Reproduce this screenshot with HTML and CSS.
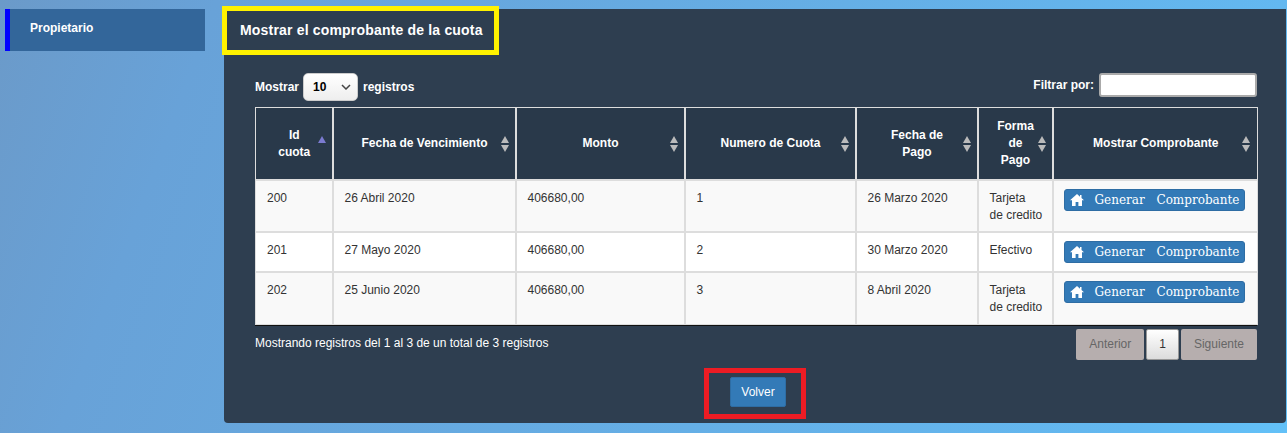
FILE: index.html
```html
<!DOCTYPE html>
<html>
	<head>
		<meta charset="utf-8"/>
		<title>Mostrar el comprobante de la cuota</title>
		<link rel="stylesheet" href="styles.css">
	</head>
	<body>
		<aside class="sidebar">
			<a class="side-item" href="#">Propietario</a>
		</aside>
		<main class="panel">
			<h1 class="panel-title">Mostrar el comprobante de la cuota</h1>
			<div class="controls">
				<label class="length">
					Mostrar
					<span class="fake-select">10
						<svg class="chevron" width="10" height="6" viewBox="0 0 10 6"><path d="M1 1l4 4 4-4" fill="none" stroke="#444" stroke-width="1.5"/></svg>
					</span>
					registros
				</label>
				<label class="filter">
					Filtrar por:
					<input type="text" class="filter-input">
				</label>
			</div>
			<table class="grid">
				<colgroup>
					<col class="c1"><col class="c2"><col class="c3"><col class="c4"><col class="c5"><col class="c6"><col class="c7">
				</colgroup>
				<thead>
					<tr>
						<th class="sorted">Id<br>cuota</th>
						<th>Fecha de Vencimiento</th>
						<th>Monto</th>
						<th>Numero de Cuota</th>
						<th>Fecha de<br>Pago</th>
						<th>Forma<br>de<br>Pago</th>
						<th>Mostrar Comprobante</th>
					</tr>
				</thead>
				<tbody>
					<tr class="odd">
						<td>200</td>
						<td>26 Abril 2020</td>
						<td>406680,00</td>
						<td>1</td>
						<td>26 Marzo 2020</td>
						<td>Tarjeta<br>de credito</td>
						<td class="action"><a class="gen-btn" href="#"><svg class="home" width="14" height="12" viewBox="0 0 14 12"><path d="M7 0L0 6.200h2V12h3.600V8h2.800v4H12V6.200h2L11.500 4V1H10v1.700z" fill="#fff"/></svg><span class="gen-label">Generar Comprobante</span></a></td>
					</tr>
					<tr>
						<td>201</td>
						<td>27 Mayo 2020</td>
						<td>406680,00</td>
						<td>2</td>
						<td>30 Marzo 2020</td>
						<td>Efectivo</td>
						<td class="action"><a class="gen-btn" href="#"><svg class="home" width="14" height="12" viewBox="0 0 14 12"><path d="M7 0L0 6.200h2V12h3.600V8h2.800v4H12V6.200h2L11.500 4V1H10v1.700z" fill="#fff"/></svg><span class="gen-label">Generar Comprobante</span></a></td>
					</tr>
					<tr class="odd">
						<td>202</td>
						<td>25 Junio 2020</td>
						<td>406680,00</td>
						<td>3</td>
						<td>8 Abril 2020</td>
						<td>Tarjeta<br>de credito</td>
						<td class="action"><a class="gen-btn" href="#"><svg class="home" width="14" height="12" viewBox="0 0 14 12"><path d="M7 0L0 6.200h2V12h3.600V8h2.800v4H12V6.200h2L11.500 4V1H10v1.700z" fill="#fff"/></svg><span class="gen-label">Generar Comprobante</span></a></td>
					</tr>
				</tbody>
			</table>
			<div class="table-foot">
				<p class="info">Mostrando registros del 1 al 3 de un total de 3 registros</p>
				<nav class="pager">
					<a class="page off" href="#">Anterior</a>
					<a class="page current" href="#">1</a>
					<a class="page off" href="#">Siguiente</a>
				</nav>
			</div>
			<div class="back">
				<div class="back-mark">
					<a class="back-btn" href="#">Volver</a>
				</div>
			</div>
		</main>
	</body>
</html>
```

FILE: styles.css
```css
body {
	margin: 0;
	box-sizing: border-box;
	height: 433px;
	overflow: hidden;
	display: flex;
	align-items: flex-start;
	padding: 9px 0 0 5px;
	font-family: "Liberation Sans", Arial, sans-serif;
	font-size: 12px;
	line-height: 17px;
	color: #333;
	background: linear-gradient(110deg, #6b9ac9 0%, #68a2d8 15%, #63b8f0 89%, #63c1f8 100%);
}
.sidebar {
	width: 200px;
	flex: none;
}
.side-item {
	display: block;
	height: 42px;
	box-sizing: border-box;
	padding: 11px 0 0 20px;
	border-left: 5px solid #0000ff;
	background: #33669a;
	color: #fff;
	font-weight: bold;
	text-decoration: none;
}
.panel {
	flex: none;
	margin-left: 19px;
	width: 1062px;
	height: 414px;
	box-sizing: border-box;
	background: #2e3e50;
	border-radius: 0 0 4px 4px;
	padding: 0 29px 0 31px;
	color: #fff;
}
.panel-title {
	box-sizing: border-box;
	width: 277px;
	height: 49px;
	margin: -3px 0 0 -33px;
	border: 5px solid #fff200;
	padding: 9px 0 0 13px;
	font-size: 14px;
	line-height: 20px;
	letter-spacing: 0.18px;
}
.controls {
	display: flex;
	justify-content: space-between;
	align-items: flex-start;
	margin-top: 18px;
	height: 34px;
	font-weight: bold;
}
.length, .filter {
	display: flex;
	align-items: center;
}
.fake-select {
	box-sizing: border-box;
	display: flex;
	align-items: center;
	justify-content: space-between;
	width: 55px;
	height: 28px;
	margin: 0 5px 0 4px;
	padding: 0 6px 0 9px;
	background: linear-gradient(#fff, #eeeeee);
	border: 1px solid #ccc;
	border-radius: 5px;
	color: #000;
}
.filter-input {
	box-sizing: border-box;
	width: 158px;
	height: 24px;
	margin: 0 0 0 5px;
	background: #fff;
	border: 2px solid #aaa;
	border-radius: 3px;
}
.grid {
	width: 1002px;
	border-collapse: collapse;
	table-layout: fixed;
}
.c1 { width: 77px; }
.c2 { width: 183px; }
.c3 { width: 169px; }
.c4 { width: 171px; }
.c5 { width: 122px; }
.c6 { width: 75px; }
.c7 { width: 205px; }
.grid th, .grid td {
	border: 2px solid #dddddd;
}
.grid th:first-child, .grid td:first-child {
	border-left-width: 1px;
}
.grid th:last-child, .grid td:last-child {
	border-right-width: 1px;
}
.grid th {
	position: relative;
	height: 71px;
	padding: 0 10px 0 11px;
	background: #29394a;
	border-top-width: 1px;
	border-bottom: 1px solid #111;
	color: #fff;
	font-weight: bold;
	text-align: center;
}
.grid th::before, .grid th::after {
	content: "";
	position: absolute;
	right: 6px;
	border-left: 4.5px solid transparent;
	border-right: 4.5px solid transparent;
}
.grid th:last-child::before, .grid th:last-child::after {
	right: 7px;
}
.grid th::before {
	top: calc(50% - 8px);
	border-bottom: 7px solid #bbb;
}
.grid th::after {
	top: calc(50% + 1px);
	border-top: 7px solid #bbb;
}
.grid th.sorted::before {
	border-bottom-color: #7b7bd0;
}
.grid th.sorted::after {
	display: none;
}
.grid td {
	padding: 9px 5px 7px 11px;
	vertical-align: top;
	background: #fff;
	color: #333;
}
.grid td.action {
	padding: 8px 5px 8px 10px;
}
.grid tr.odd td {
	background: #f9f9f9;
}
.grid tbody tr:last-child td {
	border-bottom-width: 1px;
	padding-bottom: 8px;
}
.gen-btn {
	display: flex;
	align-items: center;
	box-sizing: border-box;
	width: 181px;
	height: 22px;
	padding: 0 5px;
	background: #337ab7;
	border: 1px solid #2e6da4;
	border-radius: 3px;
	color: #fff;
	font-family: "DejaVu Serif", serif;
	font-size: 12px;
	word-spacing: 8px;
	text-decoration: none;
	white-space: nowrap;
}
.gen-label {
	padding-top: 1px;
}
.home {
	flex: none;
	margin-right: 11px;
}
.table-foot {
	display: flex;
	justify-content: space-between;
	align-items: flex-start;
	border-top: 1px solid #111;
	padding-top: 3px;
}
.info {
	margin: 6px 0 0 0;
}
.pager {
	display: flex;
	gap: 2px;
}
.page {
	box-sizing: border-box;
	height: 31px;
	padding: 7px 13px;
	border-radius: 2px;
	text-decoration: none;
}
.page.off {
	background: #b6aeae;
	color: #666;
}
.page.current {
	background: linear-gradient(#fff, #dcdcdc);
	border: 1px solid #979797;
	color: #333;
	padding: 6px 12px;
}
.back {
	display: flex;
	justify-content: center;
	margin: 8px 0 0 -2px;
}
.back-mark {
	box-sizing: border-box;
	display: flex;
	justify-content: center;
	align-items: flex-start;
	width: 102px;
	height: 51px;
	border: 5px solid #ed1c24;
	padding: 4px 0 0 6px;
}
.back-btn {
	display: block;
	box-sizing: border-box;
	width: 56px;
	height: 30px;
	line-height: 28px;
	border: 1px solid #2e6da4;
	border-radius: 2px;
	background: #337ab7;
	text-align: center;
	text-decoration: none;
	color: #fff;
}
```
